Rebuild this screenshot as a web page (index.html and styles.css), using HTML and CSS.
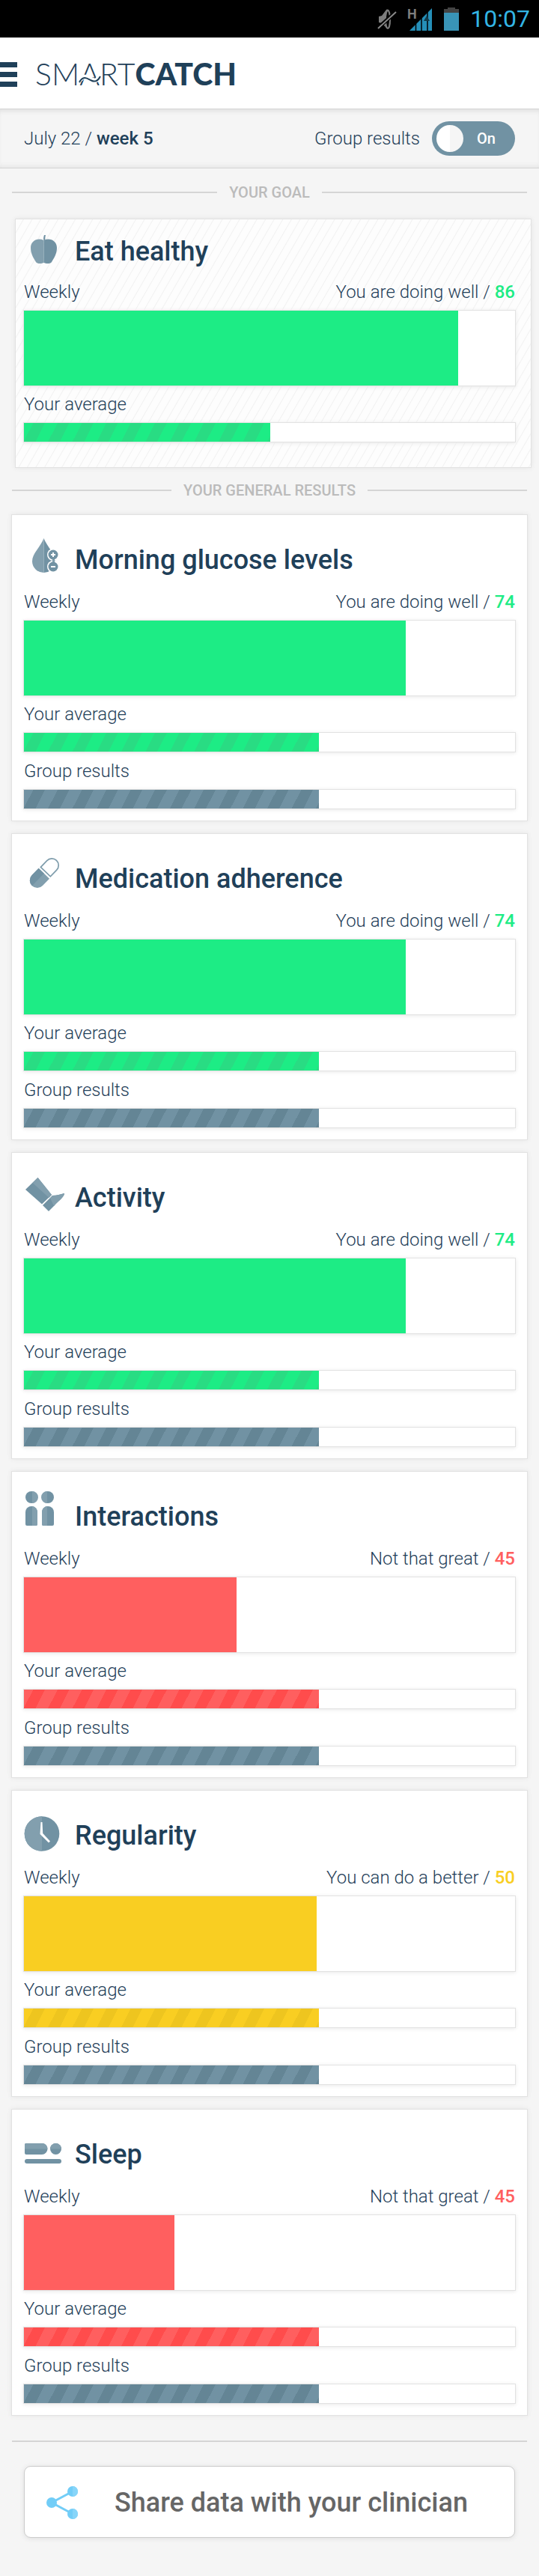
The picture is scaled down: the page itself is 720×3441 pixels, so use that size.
FILE: index.html
```
<!DOCTYPE html>
<html lang="en">
<head>
<meta charset="utf-8">
<meta name="viewport" content="width=device-width, initial-scale=1">
<title>SmartCatch</title>
<link rel="stylesheet" href="styles.css">
</head>
<body>
<div class="status-bar">
  <svg class="status-icons" width="110" height="32" viewBox="0 0 110 32" aria-hidden="true">
    <path d="M2 13l4-1 6-8c2-1 4 0 4 2v20c0 2-2 3-4 2l-6-6-4-1z" fill="#7d7d7d"/>
    <ellipse cx="14" cy="17" rx="3" ry="12" fill="#000" stroke="#7d7d7d" stroke-width="2"/>
    <path d="M0 29L25 7" stroke="#000" stroke-width="5"/>
    <path d="M1 29L25 7" stroke="#8a8a8a" stroke-width="2"/>
    <path d="M43 32L73 2v30z" fill="#258fb8"/>
    <path d="M51.5 20v12M59 12v20M67 6v26" stroke="#000" stroke-width="1.5"/>
    <path d="M66 12l4 7h-8z" fill="#123b4b"/>
    <path d="M89 8V3h5V1h10v2h5v5z" fill="#444"/>
    <path d="M89 8h20v24H89z" fill="#3994b7"/>
    <text x="40" y="16" class="network-type">H</text>
  </svg>
  <time class="clock">10:07</time>
</div>

<header class="app-header">
  <button class="menu" type="button" aria-label="Menu"><i></i><i></i><i></i></button>
  <h1 class="logo"><span class="logo-light">SM<span class="logo-a">A<svg class="logo-wave" width="32" height="28" viewBox="0 0 32 28" aria-hidden="true"><path d="M3 20C8 12 14 17 19 19.500S26 20 29 15" stroke="#fff" stroke-width="6"/><path d="M2 23C7 13 13 18 18 20.500S27 21 30 15" stroke="#1f4059" stroke-width="2"/></svg></span>RT</span><b>CATCH</b></h1>
</header>

<section class="week-bar">
  <p class="date">July 22 / <b>week 5</b></p>
  <label class="group-toggle">Group results
    <span class="switch"><input type="checkbox" role="switch" checked><span class="switch-text">On</span></span>
  </label>
</section>

<main class="page">
  <h2 class="divider">YOUR GOAL</h2>

  <article class="card goal">
    <div class="card-title">
      <svg class="icon" width="60" height="56" viewBox="0 0 60 56" aria-hidden="true">
        <path d="M27.500 20C19 16 10 21 10 30C10 38 14 44 17 49C19 52 25 51 27.500 50z" fill="#829fae"/>
        <path d="M27.500 20C36 16 45 21 45 30C45 38 41 44 38 49C36 52 30 51 27.500 50z" fill="#7192a3"/>
        <path d="M27.500 20c-1-3 0-5 .5-7h2c-.5 2-1 4-.5 7z" fill="#7192a3"/>
      </svg>
      <h3>Eat healthy</h3>
    </div>
    <p class="row"><span>Weekly</span><span>You are doing well / <b class="text-green">86</b></span></p>
    <div class="bar big"><div class="fill green" style="width:88.4%"></div></div>
    <p class="row average">Your average</p>
    <div class="bar"><div class="fill green striped" style="width:50.1%"></div></div>
  </article>

  <h2 class="divider">YOUR GENERAL RESULTS</h2>

  <div class="cards">
  <article class="card">
    <div class="card-title">
      <svg class="icon" width="60" height="56" viewBox="0 0 60 56" aria-hidden="true">
        <path d="M27.500 6C23 18 12 26 12 37a15.500 15.500 0 0 0 15.500 15z" fill="#829fae"/>
        <path d="M27.500 6C32 18 43 26 43 37a15.500 15.500 0 0 1-15.500 15z" fill="#7192a3"/>
        <circle cx="40" cy="28" r="8" fill="#fff"/><circle cx="40" cy="44" r="8" fill="#fff"/>
        <path d="M39 34h3v4h-3z" fill="#829fae"/>
        <circle cx="40" cy="28" r="6.500" fill="#7192a3"/><circle cx="40" cy="44" r="6.500" fill="#7192a3"/>
        <path d="M37 28h6M40 25v6M37 44h6" stroke="#fff" stroke-width="2"/>
      </svg>
      <h3>Morning glucose levels</h3>
    </div>
    <p class="row"><span>Weekly</span><span>You are doing well / <b class="text-green">74</b></span></p>
    <div class="bar big"><div class="fill green" style="width:77.7%"></div></div>
    <p class="row average">Your average</p>
    <div class="bar"><div class="fill green striped" style="width:60%"></div></div>
    <p class="row group">Group results</p>
    <div class="bar"><div class="fill slate striped" style="width:60%"></div></div>
  </article>

  <article class="card">
    <div class="card-title">
      <svg class="icon" width="60" height="56" viewBox="0 0 60 56" aria-hidden="true">
        <g transform="translate(28.500 27) rotate(44)">
          <path d="M-10 1H10V14A10 10 0 0 1-10 14z" fill="#829fae"/>
          <path d="M-10 1H0V24A10 10 0 0 1-10 14z" fill="#7192a3"/>
          <path d="M-9-2H9V-14A9 9 0 0 0-9-14z" fill="none" stroke="#7f9dac" stroke-width="1.700"/>
        </g>
      </svg>
      <h3>Medication adherence</h3>
    </div>
    <p class="row"><span>Weekly</span><span>You are doing well / <b class="text-green">74</b></span></p>
    <div class="bar big"><div class="fill green" style="width:77.7%"></div></div>
    <p class="row average">Your average</p>
    <div class="bar"><div class="fill green striped" style="width:60%"></div></div>
    <p class="row group">Group results</p>
    <div class="bar"><div class="fill slate striped" style="width:60%"></div></div>
  </article>

  <article class="card">
    <div class="card-title">
      <svg class="icon" width="60" height="56" viewBox="0 0 60 56" aria-hidden="true">
        <path d="M3 24L19.500 8L38 31L25 43.500z" fill="#7192a3"/>
        <path d="M12.500 15L19.500 8L38 31L34.500 35z" fill="#829fae"/>
        <path d="M26 45L39 32C45 32 50 30 55 29C55 34 45 41 42 45L34 53z" fill="#7192a3"/>
        <path d="M36 35.500L39 32C45 32 50 30 55 29C55 34 47 39 41 46z" fill="#829fae"/>
      </svg>
      <h3>Activity</h3>
    </div>
    <p class="row"><span>Weekly</span><span>You are doing well / <b class="text-green">74</b></span></p>
    <div class="bar big"><div class="fill green" style="width:77.7%"></div></div>
    <p class="row average">Your average</p>
    <div class="bar"><div class="fill green striped" style="width:60%"></div></div>
    <p class="row group">Group results</p>
    <div class="bar"><div class="fill slate striped" style="width:60%"></div></div>
  </article>

  <article class="card">
    <div class="card-title">
      <svg class="icon" width="60" height="56" viewBox="0 0 60 56" aria-hidden="true">
        <g fill="#7192a3">
          <circle cx="11" cy="9" r="8"/><path d="M3 29a8 8 0 0 1 16 0V45q0 2-2 2H5q-2 0-2-2z"/>
          <circle cx="33" cy="9" r="8"/><path d="M25 29a8 8 0 0 1 16 0V45q0 2-2 2H27q-2 0-2-2z"/>
        </g>
        <g fill="#829fae">
          <path d="M12 1a8 8 0 0 1 0 16zM12 21a8 8 0 0 1 7 8V45q0 2-2 2h-5z"/>
          <path d="M32 1a8 8 0 0 0 0 16zM32 21a8 8 0 0 0-7 8V45q0 2 2 2h5z"/>
        </g>
      </svg>
      <h3>Interactions</h3>
    </div>
    <p class="row"><span>Weekly</span><span>Not that great / <b class="text-red">45</b></span></p>
    <div class="bar big"><div class="fill red" style="width:43.3%"></div></div>
    <p class="row average">Your average</p>
    <div class="bar"><div class="fill red striped" style="width:60%"></div></div>
    <p class="row group">Group results</p>
    <div class="bar"><div class="fill slate striped" style="width:60%"></div></div>
  </article>

  <article class="card">
    <div class="card-title">
      <svg class="icon" width="60" height="56" viewBox="0 0 60 56" aria-hidden="true">
        <circle cx="25" cy="32.500" r="23.300" fill="#7192a3"/>
        <path d="M25 9.200a23.300 23.300 0 0 0 0 46.600z" fill="#829fae"/>
        <path d="M23.500 17h2l.7 15L36 42.500 34 44.500 22.500 33z" fill="#fff"/>
      </svg>
      <h3>Regularity</h3>
    </div>
    <p class="row"><span>Weekly</span><span>You can do a better / <b class="text-yellow">50</b></span></p>
    <div class="bar big"><div class="fill yellow" style="width:59.6%"></div></div>
    <p class="row average">Your average</p>
    <div class="bar"><div class="fill yellow striped" style="width:60%"></div></div>
    <p class="row group">Group results</p>
    <div class="bar"><div class="fill slate striped" style="width:60%"></div></div>
  </article>

  <article class="card">
    <div class="card-title">
      <svg class="icon" width="60" height="56" viewBox="0 0 60 56" aria-hidden="true">
        <path d="M4 20H25a7.500 7.500 0 0 1 0 15H4q-2 0-2-2V22q0-2 2-2z" fill="#7192a3"/>
        <path d="M4 20H25q7 0 7.500 7.500H2V22q0-2 2-2z" fill="#829fae"/>
        <circle cx="43.500" cy="27.500" r="7.500" fill="#7192a3"/><path d="M36 27.500a7.500 7.500 0 0 1 15 0z" fill="#829fae"/>
        <rect x="2" y="41" width="49" height="6" rx="3" fill="#7192a3"/>
      </svg>
      <h3>Sleep</h3>
    </div>
    <p class="row"><span>Weekly</span><span>Not that great / <b class="text-red">45</b></span></p>
    <div class="bar big"><div class="fill red" style="width:30.6%"></div></div>
    <p class="row average">Your average</p>
    <div class="bar"><div class="fill red striped" style="width:60%"></div></div>
    <p class="row group">Group results</p>
    <div class="bar"><div class="fill slate striped" style="width:60%"></div></div>
  </article>
  </div>

  <hr class="rule">
  <button class="share" type="button">
    <svg width="42" height="44" viewBox="0 0 42 44" aria-hidden="true">
      <path d="M35 7L7 22L35 37" fill="none" stroke="#72cdf7" stroke-width="3"/>
      <circle cx="7" cy="22" r="7" fill="#72cdf7"/>
      <circle cx="35" cy="7" r="7" fill="#72cdf7"/><circle cx="35" cy="37" r="7" fill="#72cdf7"/>
      <path d="M35 0a7 7 0 0 1 0 14zM35 30a7 7 0 0 1 0 14z" fill="#87d5f9"/>
    </svg>
    <span>Share data with your clinician</span>
  </button>
</main>
</body>
</html>
```
FILE: styles.css
```
* { box-sizing: border-box; }
body, h1, h2, h3, p { margin: 0; }
body {
  background: #f5f5f5;
  color: #1f4059;
  font: 300 24px/28px Roboto, sans-serif;
}
b { font-weight: 500; }
button { font: inherit; color: inherit; border: 0; padding: 0; background: none; }

.status-bar {
  display: flex;
  justify-content: flex-end;
  align-items: center;
  gap: 14px;
  height: 50px;
  padding-right: 12px;
  background: #000;
}
.status-icons { overflow: visible; }
.network-type { font: 700 18px Roboto, sans-serif; fill: #7d7d7d; }
.clock { color: #33b5e5; font-size: 32px; font-weight: 400; }

.app-header {
  display: flex;
  align-items: center;
  gap: 24px;
  height: 96px;
  padding-top: 2px;
  background: #fff;
  border-top: 1px solid #ddd;
  border-bottom: 1px solid #d5d5d5;
}
.menu { display: grid; gap: 6px; width: 23px; }
.menu i { height: 7px; background: #1f4059; }
.logo { font: 300 41px/42px Lato, sans-serif; }
.logo b { font-weight: 900; }
.logo-a { position: relative; }
.logo-wave { position: absolute; left: -2px; bottom: 8px; fill: none; }

.week-bar {
  display: flex;
  justify-content: space-between;
  align-items: center;
  height: 79px;
  padding: 0 32px;
  border-bottom: 1px solid #d5d5d5;
  box-shadow: inset 0 6px 6px -4px #ddd, inset 0 -6px 6px -4px #e4e4e4;
}
.group-toggle { display: flex; align-items: center; gap: 16px; }
.switch { position: relative; display: flex; }
.switch input {
  appearance: none;
  width: 111px;
  height: 46px;
  margin: 0;
  border-radius: 23px;
  background: #7192a3;
}
.switch input::before {
  content: "";
  display: block;
  width: 36px;
  height: 36px;
  margin: 5px 6px;
  border-radius: 50%;
  background: linear-gradient(90deg, #fff 50%, #f5f5f5 50%);
}
.switch-text {
  position: absolute;
  right: 26px;
  top: 9px;
  color: #fff;
  font-size: 20px;
  font-weight: 500;
}

.page { padding: 2px 15px 51px; }
.divider {
  display: flex;
  align-items: center;
  gap: 16px;
  height: 60px;
  padding: 0 1px;
  color: #bbb;
  font-size: 20px;
  font-weight: 500;
}
.divider::before, .divider::after {
  content: "";
  flex: 1;
  height: 2px;
  background: #d5d5d5;
}
.cards { display: grid; gap: 16px; margin-top: 2px; }
.card {
  padding: 25px 15px 15px;
  background: #fff;
  border: 1px solid #e2e2e2;
  box-shadow: 0 0 6px #e4e4e4;
}
.card-title {
  display: flex;
  align-items: flex-end;
  gap: 9px;
  margin-bottom: 21px;
}
.card-title h3 { font-size: 36px; line-height: 42px; font-weight: 500; }
.goal {
  margin: 5px -5px 0 5px;
  padding: 8px 20px 33px 10px;
  background: repeating-linear-gradient(120deg, #fdfdfd 0 8px, #f1f1f1 9px, #fdfdfd 10px);
}
.goal .card-title { margin-bottom: 19px; }
.icon { display: block; overflow: visible; }
.row { display: flex; justify-content: space-between; margin: 0 1px 10px; }
.average { margin-top: 10px; }
.group { margin-top: 11px; }
.text-green { color: #1dec85; }
.text-red { color: #ff5f5f; }
.text-yellow { color: #f9ce22; }

.bar {
  height: 27px;
  background: #fff;
  border: 1px solid #e2e2e2;
  box-shadow: 0 1px 5px #e8e8e8;
}
.big { height: 102px; }
.fill { height: 100%; background: var(--tone); }
.green { --tone: #1dec85; --stripe: #29dc83; }
.red { --tone: #ff5f5f; --stripe: #ff4c4c; }
.yellow { --tone: #f9ce22; --stripe: #eec51f; }
.slate { --tone: #7192a3; --stripe: #648595; }
.striped {
  background: repeating-linear-gradient(117deg, var(--tone) 0 11px, var(--stripe) 11px 25px, var(--tone) 25px 29px);
}

.rule { height: 2px; margin: 33px 1px 32px; border: 0; background: #d5d5d5; }
.share {
  display: flex;
  align-items: center;
  gap: 49px;
  width: calc(100% - 34px);
  height: 96px;
  margin: 0 17px;
  padding: 2px 29px 0;
  background: #fff;
  border: 1px solid #ccc;
  border-radius: 9px;
  box-shadow: 0 1px 6px #ddd;
  color: #666;
  font-size: 36px;
  font-weight: 500;
  line-height: 42px;
}
```
